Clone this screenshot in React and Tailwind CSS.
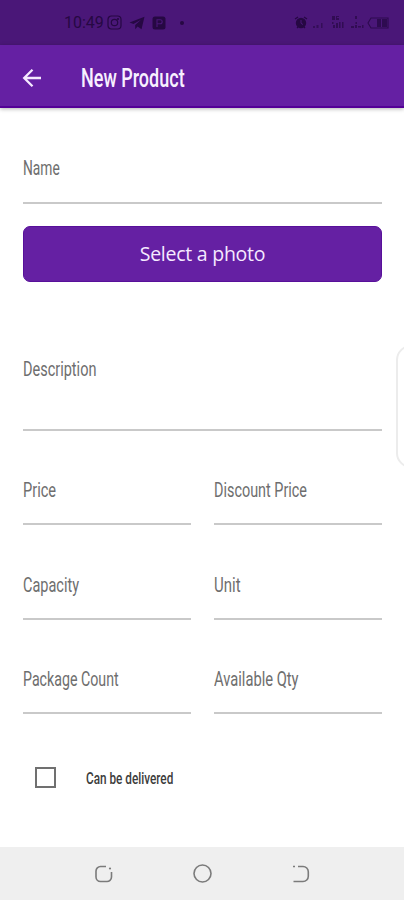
import { useState } from 'react'

const Label = ({ children, stretch }) => (
  <span className={`block origin-left whitespace-nowrap font-['Roboto',sans-serif] text-[20px] leading-[26px] font-[450] text-[#6e6e6e] ${stretch}`}>
    {children}
  </span>
)

const Field = ({ label, stretch, height = 'h-[49px]' }) => (
  <div className={`w-full border-b-2 border-[#c9c9c9] ${height}`}>
    <Label stretch={stretch}>{label}</Label>
  </div>
)

const StatusBar = () => (
  <div className="h-[45px] bg-[#4a1778] flex items-center justify-between pl-[64px] pr-[13px] text-[#260843]">
    <div className="flex items-center">
      <span className="w-[40px] whitespace-nowrap font-['Roboto',sans-serif] text-[16px] leading-5">10:49</span>
      <svg className="ml-[3px]" width="15" height="15" viewBox="0 0 15 15" fill="none" stroke="currentColor" strokeWidth="1.2">
        <rect x="1" y="1" width="13" height="13" rx="3.5" />
        <circle cx="7.5" cy="7.5" r="3.2" />
        <circle cx="11" cy="4" r=".5" />
      </svg>
      <svg className="ml-[7px]" width="16" height="14" viewBox="0 0 16 14" fill="currentColor">
        <path d="M15.5.8.5 6.6l4 1.5L12 3.8 6.2 9v4.2l2.4-2.6 3.9 2.7z" />
      </svg>
      <svg className="ml-[7px]" width="14" height="14" viewBox="0 0 14 14">
        <rect x=".5" y=".5" width="13" height="13" rx="2.5" fill="currentColor" />
        <path d="M5 11V3.8h3.2a2 2 0 0 1 0 4H5" fill="none" stroke="#4a1778" strokeWidth="1.1" />
      </svg>
      <span className="ml-[14px] size-1 rounded-full bg-current" />
    </div>
    <svg width="97" height="20" viewBox="0 0 97 20" fill="currentColor">
      <circle cx="7" cy="10" r="5.2" />
      <path d="m1 6 3-2M13 6l-3-2M3 15l1-1M11 15l-1-1" stroke="currentColor" strokeWidth="1.3" />
      <path d="M7 7v3.3l2 1.2" fill="none" stroke="#4a1778" />
      <path d="M19 13h2v2h-2zM22.500 12h2v3h-2zM27 10h1.500v5H27z" opacity=".6" />
      <path d="M38 3h3v4h-3zM42 3h3v1h-2v1h2v2h-3zM38 9h1.500v2H38zM39 12h2v3h-2zM42 10h2v5h-2zM45 9h1.500v6H45zM48 9h1.500v6H48z" opacity=".7" />
      <path d="M61 3h2v3h-2zM61.500 9H63v2h-1.500zM57 13h3v2h-3zM61 12h2v3h-2zM64 13h3v1.500h-3zM68 12h1.500v3H68z" opacity=".7" />
      <path d="M81 5h-4l-3 5 3 5h4M81 5h13v10H81" fill="none" stroke="currentColor" strokeWidth="1.1" opacity=".8" />
      <path d="M83 6h4v8h-4zM88 6h5v8h-5z" opacity=".75" />
    </svg>
  </div>
)

const Header = () => (
  <header className="relative h-[63px] bg-[#6520a3] border-b-2 border-[#540097] flex items-center pl-[22px] shadow-[0_1px_4px_rgba(0,0,0,0.3)]">
    <button aria-label="Back" className="mt-1">
      <svg width="20" height="20" viewBox="0 0 20 20" fill="none" stroke="#f5eaff" strokeWidth="2.3">
        <path d="M19 10H2.500M10.500 1.700 2.200 10l8.300 8.300" />
      </svg>
    </button>
    <h1 className="ml-[39px] mt-[6px] origin-left scale-x-[0.72] whitespace-nowrap font-['Roboto',sans-serif] text-[25px] leading-8 font-medium text-[#f8f0ff]">
      New Product
    </h1>
  </header>
)

const NavBar = () => (
  <nav className="h-[53px] bg-[#efefef] flex items-center justify-between pl-[94px] pr-[93px] text-[#7b7b7b]">
    <svg width="20" height="20" viewBox="0 0 20 20" fill="none" stroke="currentColor" strokeWidth="1.6">
      <path d="M12 2.500H6.500a4.500 4.500 0 0 0-4.500 4.500v6a4.500 4.500 0 0 0 4.500 4.500h6A4.500 4.500 0 0 0 17.500 13V8" />
      <circle cx="16" cy="4.500" r="1.1" fill="currentColor" stroke="none" />
    </svg>
    <svg width="20" height="20" viewBox="0 0 20 20" fill="none" stroke="currentColor" strokeWidth="1.6">
      <circle cx="9.500" cy="9.500" r="8.500" />
    </svg>
    <svg width="20" height="20" viewBox="0 0 20 20" fill="none" stroke="currentColor" strokeWidth="1.6">
      <path d="M7 2.500h5a5.300 5.300 0 0 1 5.300 5.300v4.400a5.300 5.300 0 0 1-5.300 5.300H2.500" />
      <path d="M2 2.500h2" />
    </svg>
  </nav>
)

export default function App() {
  const [delivered, setDelivered] = useState(false)

  return (
    <div className="relative w-[404px] h-[900px] overflow-hidden bg-white flex flex-col">
      <StatusBar />
      <Header />

      <main className="flex-1 px-[23px] pr-[22px] pt-[47px]">
        <Field label="Name" stretch="scale-x-[0.69]" />

        <button className="mt-[22px] h-[56px] w-full rounded-[7px] bg-[#6520a3] border border-[#58109a] pb-px font-['Open_Sans',sans-serif] text-[19.5px] leading-6 font-medium tracking-[-0.25px] text-[#f5eaff]">
          Select a photo
        </button>

        <div className="mt-[74px]">
          <Field label="Description" stretch="scale-x-[0.725]" height="h-[75px]" />
        </div>

        {/* Pricing and stock */}
        <div className="mt-[46px] grid grid-cols-2 gap-x-[23px] gap-y-[46.500px]">
          <Field label="Price" stretch="scale-x-[0.73]" height="h-[48px]" />
          <Field label="Discount Price" stretch="scale-x-[0.72]" height="h-[48px]" />
          <Field label="Capacity" stretch="scale-x-[0.725]" height="h-[48px]" />
          <Field label="Unit" stretch="scale-x-[0.75]" height="h-[48px]" />
          <Field label="Package Count" stretch="scale-x-[0.71]" height="h-[48px]" />
          <Field label="Available Qty" stretch="scale-x-[0.735]" height="h-[48px]" />
        </div>

        <label className="mt-[52px] ml-[12px] flex items-center">
          <input
            type="checkbox"
            checked={delivered}
            onChange={(e) => setDelivered(e.target.checked)}
            className="size-[21px] appearance-none border-2 border-[#707070] checked:bg-[#6520a3]"
          />
          <span className="ml-[30px] mt-[3px] origin-left scale-x-[0.735] whitespace-nowrap font-['Roboto',sans-serif] text-[16px] leading-5 font-medium text-[#3c3c3c]">
            Can be delivered
          </span>
        </label>
      </main>

      <NavBar />

      {/* Edge panel handle */}
      <div className="absolute -right-[22px] top-[345px] h-[123px] w-[30px] rounded-[15px] border-2 border-[#ececec] bg-white" />
    </div>
  )
}
